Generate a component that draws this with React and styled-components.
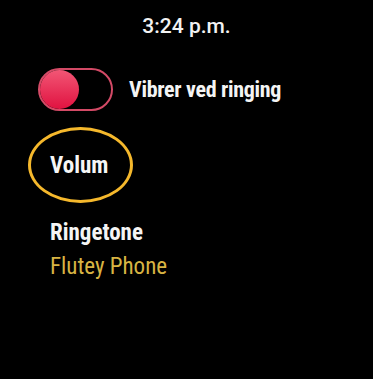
import { useState } from "react";
import styled, { createGlobalStyle } from "styled-components";

const GlobalStyle = createGlobalStyle`
  html, body {
    margin: 0;
    padding: 0;
    background: #000;
  }
  body {
    font-family: 'Roboto', 'Liberation Sans', sans-serif;
  }
`;

const Screen = styled.div`
  width: 373px;
  height: 379px;
  background: #000;
  color: #fff;
  display: flex;
  flex-direction: column;
  overflow: hidden;
`;

const Clock = styled.div`
  padding-top: 14px;
  text-align: center;
  font-family: 'Roboto', sans-serif;
  font-size: 21px;
  font-weight: 500;
  line-height: 24px;
  color: #f2f2f2;
`;

const Condensed = styled.span`
  font-family: 'Roboto Condensed', 'Liberation Sans Narrow', 'Roboto', sans-serif;
  font-stretch: condensed;
  display: inline-block;
  white-space: nowrap;
`;

const ToggleRow = styled.label`
  display: flex;
  align-items: center;
  gap: 16px;
  padding-left: 38px;
  margin-top: 30px;
  cursor: pointer;
`;

const Track = styled.button`
  position: relative;
  width: 75px;
  height: 43px;
  padding: 0;
  border-radius: 22px;
  border: 2px solid #d34a66;
  background: #000;
  cursor: pointer;
`;

const Knob = styled.span`
  position: absolute;
  top: 0;
  left: ${(p) => (p.$on ? "32px" : "0")};
  width: 39px;
  height: 39px;
  border-radius: 50%;
  background: linear-gradient(180deg, #f25675 0%, #e01240 100%);
`;

const ToggleLabel = styled(Condensed)`
  font-size: 22px;
  font-weight: 700;
  letter-spacing: -0.3px;
  color: #f4f4f4;
`;

const Highlight = styled.div`
  margin: 16px 0 0 28px;
  width: 105px;
  height: 76px;
  box-sizing: border-box;
  border: 3px solid #f5b82c;
  border-radius: 50%;
  display: flex;
  align-items: center;
  padding-left: 19px;
`;

const HighlightText = styled(Condensed)`
  font-size: 23px;
  font-weight: 700;
  color: #f6f6f6;
`;

const Item = styled.div`
  display: flex;
  flex-direction: column;
  padding-left: 50px;
  margin-top: 16px;
`;

const ItemTitle = styled(Condensed)`
  font-size: 23px;
  font-weight: 700;
  line-height: 28px;
  color: #f4f4f4;
`;

const ItemValue = styled(Condensed)`
  font-size: 23px;
  font-weight: 400;
  line-height: 28px;
  margin-top: 6px;
  color: #d8b443;
`;

const App = () => {
  const [vibrate, setVibrate] = useState(false);

  return (
    <Screen>
      <GlobalStyle />
      <Clock>3:24 p.m.</Clock>
      <ToggleRow>
        <Track type="button" onClick={() => setVibrate(!vibrate)}>
          <Knob $on={vibrate} />
        </Track>
        <ToggleLabel>Vibrer ved ringing</ToggleLabel>
      </ToggleRow>
      <Highlight>
        <HighlightText>Volum</HighlightText>
      </Highlight>
      <Item>
        <ItemTitle>Ringetone</ItemTitle>
        <ItemValue>Flutey Phone</ItemValue>
      </Item>
    </Screen>
  );
};

export default App;
